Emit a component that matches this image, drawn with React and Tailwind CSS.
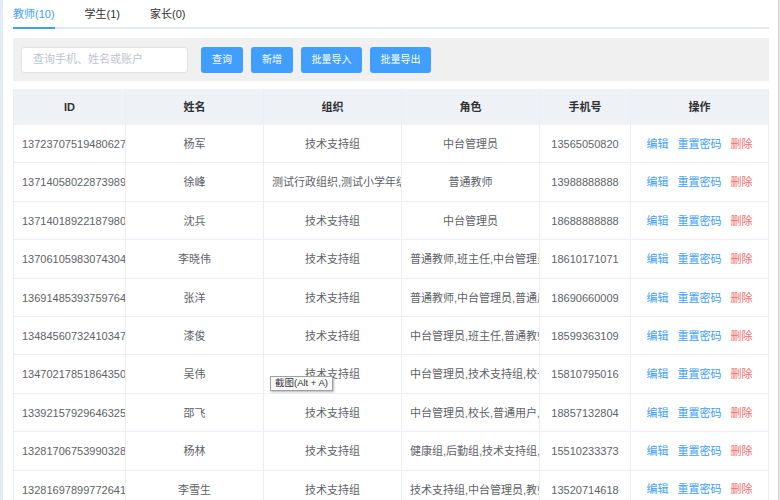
import React from 'react';

const rows = [
  ['1372370751948062721', '杨军', '技术支持组', '中台管理员', '13565050820'],
  ['1371405802287398913', '徐峰', '测试行政组织,测试小学年级组', '普通教师', '13988888888'],
  ['1371401892218798081', '沈兵', '技术支持组', '中台管理员', '18688888888'],
  ['1370610598307430401', '李晓伟', '技术支持组', '普通教师,班主任,中台管理员', '18610171071'],
  ['1369148539375976449', '张洋', '技术支持组', '普通教师,中台管理员,普通用户', '18690660009'],
  ['1348456073241034753', '漆俊', '技术支持组', '中台管理员,班主任,普通教师', '18599363109'],
  ['1347021785186435073', '吴伟', '技术支持组', '中台管理员,技术支持组,校长', '15810795016'],
  ['1339215792964632577', '邵飞', '技术支持组', '中台管理员,校长,普通用户,教师', '18857132804'],
  ['1328170675399032833', '杨林', '技术支持组', '健康组,后勤组,技术支持组,校长', '15510233373'],
  ['1328169789977264129', '李雪生', '技术支持组', '技术支持组,中台管理员,教师', '13520714618'],
];

const cols = 'grid grid-cols-[112px_138px_138px_138px_91px_137px]';
const cell = 'overflow-hidden whitespace-nowrap text-center px-[8px] border-r border-[#ebeef5] last:border-r-0';

export default function App() {
  return (
    <div className="relative flex h-[500px] w-full overflow-hidden bg-white font-['Liberation_Sans','Noto_Sans_CJK_SC',sans-serif] text-[11px] text-[#606266]">
      <div className="w-[3px] shrink-0 bg-[#e3edf9]" />
      <div className="flex-1 pl-[10px] pr-[9px]">
        {/* tabs */}
        <div className="flex h-[29px] gap-[30px] border-b-2 border-[#e4e7ed]">
          <div className="relative flex items-center pt-[1px] text-[#409eff]">
            教师(10)
            <div className="absolute bottom-[-2px] left-0 right-0 h-[2px] bg-[#409eff]" />
          </div>
          <div className="flex items-center pt-[1px] text-[#303133]">学生(1)</div>
          <div className="flex items-center pt-[1px] text-[#303133]">家长(0)</div>
        </div>

        {/* search */}
        <div className="mt-[9px] flex h-[43px] items-center bg-[#f0f0f0] px-[8px]">
          <div className="flex h-[26px] w-[167px] items-center rounded-[3px] border border-[#e4e4e4] bg-white pl-[11px] text-[#c0c4cc]">
            查询手机、姓名或账户
          </div>
          <div className="ml-[13px] flex gap-[8px] text-[10px] text-white">
            <button className="h-[26px] w-[42px] rounded-[3px] bg-[#409eff]">查询</button>
            <button className="h-[26px] w-[42px] rounded-[3px] bg-[#409eff]">新增</button>
            <button className="h-[26px] w-[61px] rounded-[3px] bg-[#409eff]">批量导入</button>
            <button className="h-[26px] w-[61px] rounded-[3px] bg-[#409eff]">批量导出</button>
          </div>
        </div>

        {/* table */}
        <div className="mt-[8px] border-l border-r border-[#ebeef5]">
          <div className={`${cols} h-[36px] bg-[#eef1f6] font-bold leading-[37px] text-[#303133]`}>
            {['ID', '姓名', '组织', '角色', '手机号', '操作'].map((h) => (
              <div key={h} className={cell}>{h}</div>
            ))}
          </div>
          {rows.map((r) => (
            <div key={r[0]} className={`${cols} h-[38.4px] border-b border-[#ebeef5] leading-[39.5px]`}>
              <div className={`${cell} text-left`}>{r[0]}</div>
              <div className={cell}>{r[1]}</div>
              <div className={cell}>{r[2]}</div>
              <div className={cell}>{r[3]}</div>
              <div className={cell}>{r[4]}</div>
              <div className={`${cell} flex items-center justify-center gap-[9px] pt-[2px]`}>
                <span className="text-[#409eff]">编辑</span>
                <span className="text-[#409eff]">重置密码</span>
                <span className="text-[#f56c6c]">删除</span>
              </div>
            </div>
          ))}
        </div>
      </div>
      <div className="w-[4px] shrink-0 border-l border-[#cfcfcf] bg-[#e6e6e6]" />

      {/* screenshot tooltip */}
      <div className="absolute left-[270px] top-[376px] flex h-[15px] w-[63px] items-center justify-center border border-[#a0a0a0] bg-[#fafafa] text-[9.5px] text-[#333] shadow-[1px_1px_2px_rgba(0,0,0,0.3)]">
        截图(Alt + A)
      </div>
    </div>
  );
}
